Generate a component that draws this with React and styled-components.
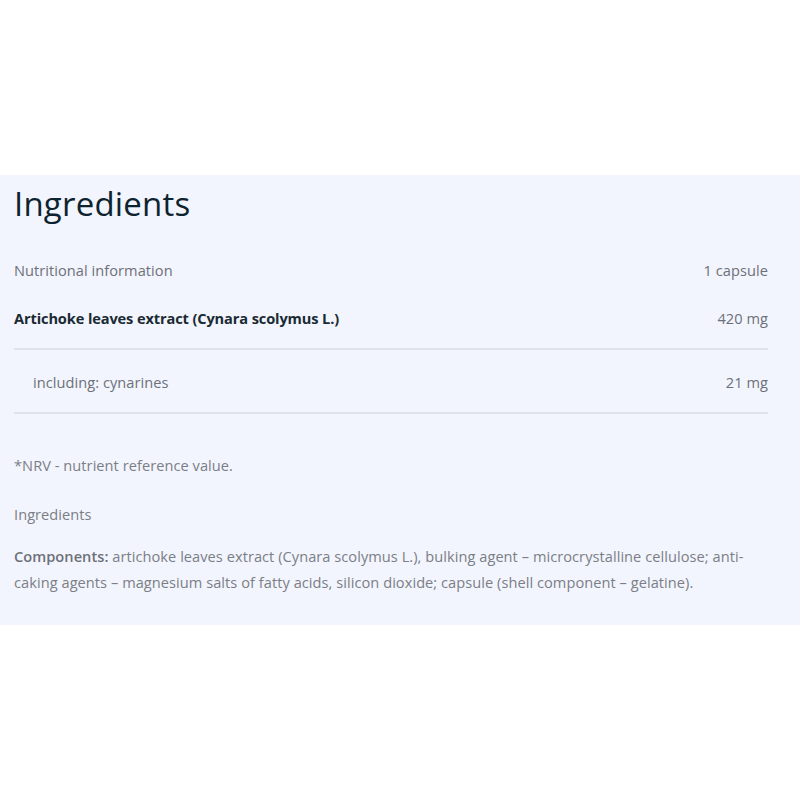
import React from "react";
import styled, { createGlobalStyle } from "styled-components";

const Global = createGlobalStyle`
  html, body { margin: 0; padding: 0; background: #ffffff; }
  body { font-family: "Open Sans", "Noto Sans", sans-serif; }
`;

const Page = styled.div`
  width: 800px;
  height: 800px;
  padding-top: 175px;
  box-sizing: border-box;
`;

const Panel = styled.section`
  background: #f2f5fd;
  padding: 8px 32px 32px 14px;
  height: 450px;
  box-sizing: border-box;
`;

const Title = styled.h2`
  margin: 0;
  font-size: 33px;
  font-weight: 400;
  line-height: 42px;
  color: #0e2330;
  letter-spacing: 0.2px;
`;

const Table = styled.div`
  margin-top: 35px;
  display: flex;
  flex-direction: column;
`;

const Row = styled.div`
  display: flex;
  justify-content: space-between;
  align-items: center;
  line-height: 20px;
  padding: ${(p) => p.$pt || 0}px 0 ${(p) => p.$pb || 0}px;
  border-bottom: ${(p) => (p.$line ? "2px solid #dde2ec" : "none")};
  font-size: 14.6px;
  letter-spacing: 0.05px;
  color: #6d7079;
`;

const Label = styled.span`
  padding-left: ${(p) => (p.$indent ? 19 : 0)}px;
  font-weight: ${(p) => (p.$bold ? 700 : 400)};
  letter-spacing: ${(p) => (p.$bold ? "-0.12px" : "0.05px")};
  color: ${(p) => (p.$bold ? "#1a2a33" : "#6d7079")};
`;

const Value = styled.span`
  color: #6d7079;
`;

const Note = styled.p`
  margin: ${(p) => p.$mt}px 0 0;
  font-size: 14.6px;
  letter-spacing: 0.05px;
  line-height: 26px;
  color: #7b7e86;
  hyphens: manual;
`;

const Strong = styled.strong`
  font-weight: 600;
  color: #6d7079;
`;

export default function App() {
  return (
    <>
      <Global />
      <Page>
        <Panel>
          <Title>Ingredients</Title>
          <Table>
            <Row>
              <Label>Nutritional information</Label>
              <Value>1 capsule</Value>
            </Row>
            <Row $pt={28} $pb={20} $line>
              <Label $bold>Artichoke leaves extract (Cynara scolymus L.)</Label>
              <Value>420 mg</Value>
            </Row>
            <Row $pt={22} $pb={20} $line>
              <Label $indent>including: cynarines</Label>
              <Value>21 mg</Value>
            </Row>
          </Table>
          <Note $mt={38}>*NRV - nutrient reference value.</Note>
          <Note $mt={23}>Ingredients</Note>
          <Note $mt={16}>
            <Strong>Components:</Strong> artichoke leaves extract (Cynara scolymus L.), bulking agent – microcrystalline cellulose; anti-caking agents – magnesium salts of fatty acids, silicon dioxide; capsule (shell component – gelatine).
          </Note>
        </Panel>
      </Page>
    </>
  );
}
